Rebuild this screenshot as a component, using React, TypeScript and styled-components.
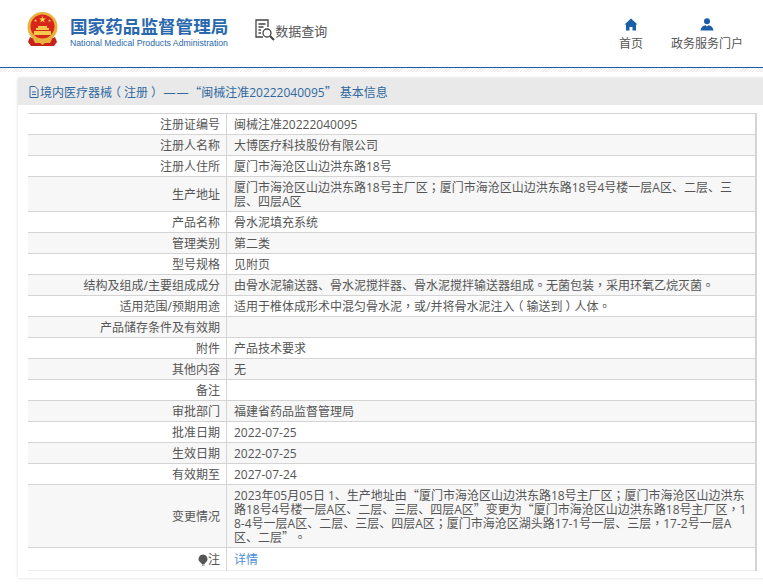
import React from 'react';
import styled, { createGlobalStyle } from 'styled-components';

const GlobalStyle = createGlobalStyle`
    html, body {
        margin: 0;
        padding: 0;
        background: #fff;
        overflow: hidden;
    }
    body {
        font-family: "Open Sans", "Noto Sans CJK SC", sans-serif;
    }
`

const Page = styled.div`
    width: 763px;
    height: 585px;
    overflow: hidden;
`

const Header = styled.header`
    display: flex;
    align-items: flex-start;
    height: 67px;
    border-bottom: 1px solid #1a5ea6;
`

const Brand = styled.div`
    display: flex;
    gap: 11px;
    margin: 12px 0 0 26px;
`

const BrandText = styled.div`
    display: flex;
    flex-direction: column;
    color: #2a68ad;
    font-family: "Liberation Sans", "Noto Sans CJK SC", sans-serif;
`

const BrandName = styled.div`
    font-size: 17.6px;
    font-weight: 700;
    line-height: 24px;
    margin-top: 3px;
`

const BrandEnglish = styled.div`
    font-size: 8.7px;
    line-height: 11px;
    margin-top: -1px;
    white-space: nowrap;
`

const QueryLink = styled.div`
    display: flex;
    align-items: center;
    margin: 19px 0 0 27px;
    font-size: 13px;
    color: #555;
`

const Nav = styled.nav`
    display: flex;
    margin-left: auto;
    margin-right: 20px;
    gap: 28px;
    margin-top: 18px;
`

const NavItem = styled.div`
    display: flex;
    flex-direction: column;
    align-items: center;
    gap: 5px;
    font-size: 12px;
    line-height: 16px;
    color: #555;
`

const Stripe = styled.div`
    height: 4px;
    background: repeating-linear-gradient(135deg, #ececec 0 1px, #fff 1px 2px);
`

const Panel = styled.section`
    margin: 6px 0 0 18px;
    width: 760px;
    height: 500px;
    background: #fff;
    box-shadow: 0 0 3px rgba(0, 0, 0, 0.16);
`

const PanelHeading = styled.h1`
    display: flex;
    align-items: center;
    margin: 0;
    height: 27px;
    padding-left: 11px;
    background: #e9e9e9;
    color: #30689f;
    font-size: 12px;
    font-weight: 400;
    white-space: pre;
`

const InfoTable = styled.table`
    border-collapse: collapse;
    table-layout: fixed;
    width: 729px;
    margin: 8px 0 0 10px;
    font-size: 12px;
    color: #555;
    border-top: 1px solid #d4d4d4;
`

const Row = styled.tr<{ $shaded: boolean }>`
    background: ${(p) => (p.$shaded ? '#f7f7f7' : '#fff')};
    border-bottom: 1px solid #d4d4d4;

    &:last-child {
        border-bottom-color: #ececec;
    }
`

const LabelCell = styled.td`
    width: 192px;
    padding: 2px 6px 0 0;
    text-align: right;
    border-right: 1px solid #d4d4d4;
    line-height: 14px;
`

const ValueCell = styled.td<{ $height: number }>`
    height: ${(p) => p.$height}px;
    padding: 4px 6px 2px 7px;
    box-sizing: border-box;
    line-height: 14px;
    word-break: break-all;
    border-right: 2px solid #d4d4d4;
`

const DetailLink = styled.a`
    color: #4a8fd8;
`

// full-width punctuation, the latin font would otherwise take the quotes
const Mark = styled.span<{ $nudge?: number }>`
    display: inline-block;
    width: 12px;
    line-height: 12px;
    font-family: "Noto Sans CJK TC", sans-serif;
    margin-left: ${(p) => p.$nudge ?? 0}px;
    margin-right: ${(p) => -(p.$nudge ?? 0)}px;
`

const QuoteMark = styled(Mark)`
    font-family: "Noto Sans CJK SC", sans-serif;
`

// wider than its box so that two of them join into one line
const DashMark = styled(QuoteMark)`
    width: 13px;
    font-size: 14px;
`

const typeset = (text: string) =>
    text.split(/([“”—；，。（）])/).map((part, i) => {
        if (part === '“' || part === '”') {
            return <QuoteMark key={i}>{part}</QuoteMark>;
        }
        if (part === '—') {
            return <DashMark key={i}>{part}</DashMark>;
        }
        if (part === '（') {
            return <Mark key={i} $nudge={-3}>{part}</Mark>;
        }
        if (part === '）') {
            return <Mark key={i} $nudge={3}>{part}</Mark>;
        }
        if (part.length === 1 && '；，。'.includes(part)) {
            return <Mark key={i}>{part}</Mark>;
        }
        return part;
    });

const BulbIcon = () => (
    <svg width="10" height="12" viewBox="0 0 10 12" style={{ verticalAlign: -2 }}>
        <path d="M5 0.5a4.5 4.5 0 0 1 4 6.500L6 10.500H4.500L1 7a4.500 4.500 0 0 1 4-6.500z" fill="#555" />
        <rect x="4" y="10.500" width="2.500" height="1.500" fill="#aaa" />
    </svg>
);

const rows: { label: React.ReactNode; value?: React.ReactNode; height?: number }[] = [
    { label: '注册证编号', value: '闽械注准20222040095' },
    { label: '注册人名称', value: '大博医疗科技股份有限公司' },
    { label: '注册人住所', value: '厦门市海沧区山边洪东路18号' },
    { label: '生产地址', value: typeset('厦门市海沧区山边洪东路18号主厂区；厦门市海沧区山边洪东路18号4号楼一层A区、二层、三层、四层A区'), height: 35 },
    { label: '产品名称', value: '骨水泥填充系统' },
    { label: '管理类别', value: '第二类' },
    { label: '型号规格', value: '见附页' },
    { label: '结构及组成/主要组成成分', value: typeset('由骨水泥输送器、骨水泥搅拌器、骨水泥搅拌输送器组成。无菌包装，采用环氧乙烷灭菌。') },
    { label: '适用范围/预期用途', value: typeset('适用于椎体成形术中混匀骨水泥，或/并将骨水泥注入（输送到）人体。') },
    { label: '产品储存条件及有效期' },
    { label: '附件', value: '产品技术要求' },
    { label: '其他内容', value: '无' },
    { label: '备注' },
    { label: '审批部门', value: '福建省药品监督管理局' },
    { label: '批准日期', value: '2022-07-25' },
    { label: '生效日期', value: '2022-07-25' },
    { label: '有效期至', value: '2027-07-24' },
    {
        label: '变更情况',
        value: typeset('2023年05月05日 1、生产地址由“厦门市海沧区山边洪东路18号主厂区；厦门市海沧区山边洪东路18号4号楼一层A区、二层、三层、四层A区”变更为“厦门市海沧区山边洪东路18号主厂区，18-4号一层A区、二层、三层、四层A区；厦门市海沧区湖头路17-1号一层、三层，17-2号一层A区、二层”。'),
        height: 63,
    },
    {
        label: (
            <>
                <BulbIcon />
                注
            </>
        ),
        value: <DetailLink>详情</DetailLink>,
        height: 23,
    },
];

const Emblem = () => (
    <svg width="33" height="36" viewBox="0 0 33 36">
        <circle cx="16.5" cy="15" r="15" fill="#e8b23c" />
        <circle cx="16.5" cy="14.500" r="12" fill="#d9261c" />
        <path d="M16.500 4l.9 2.500H20l-2.100 1.600.8 2.500-2.200-1.500-2.200 1.500.8-2.500L13 6.500h2.600z" fill="#f5d547" />
        <path d="M9.500 7l.4 1.100h1.200l-1 .7.400 1.200-1-.7-1 .7.400-1.200-1-.7h1.200zM23.500 7l.4 1.100h1.200l-1 .7.400 1.200-1-.7-1 .7.400-1.200-1-.7h1.200z" fill="#f5d547" />
        <path d="M12 14h9v2h2v2H10v-2h2zM8 19h17v4H8z" fill="#f2c94c" />
        <path d="M4 25l4 2h17l4-2 2 5-3 4H5l-3-4z" fill="#c9211a" />
        <path d="M7 27h19l-2 4h-5l-2.500 2-2.500-2H9z" fill="#e8b23c" />
    </svg>
);

const QueryIcon = () => (
    <svg width="20" height="22" viewBox="0 0 20 22" fill="none" stroke="#444" strokeWidth="1.300">
        <path d="M8 18H1V1h12v7" />
        <path d="M3.500 5h7M3.500 8h5M3.500 11h2.500M3.500 14h2.500" />
        <circle cx="12" cy="14" r="4" />
        <path d="M15 17l4 4" strokeWidth="2.200" />
    </svg>
);

const HomeIcon = () => (
    <svg width="14" height="13" viewBox="0 0 14 13" fill="#1a5ea6">
        <path d="M7 0.500L0.500 6.500H2V12.500H5.500V9H8.500V12.500H12V6.500H13.500z" />
    </svg>
);

const UserIcon = () => (
    <svg width="14" height="13" viewBox="0 0 14 13" fill="#1a5ea6">
        <circle cx="7" cy="3.200" r="3" />
        <path d="M0.500 12.500C1 9 3 7.500 5.500 7.200L7 8.500l1.500-1.300C11 7.500 13 9 13.500 12.500z" />
    </svg>
);

const DocIcon = () => (
    <svg width="10" height="12" viewBox="0 0 10 12" fill="none" stroke="#30689f" style={{ marginRight: 1 }}>
        <path d="M1 .5h5l3 3v8H1zM3 6h4M3 8.500h4" />
    </svg>
);

const App: React.FC = () => (
    <Page>
        <GlobalStyle />
        <Header>
            <Brand>
                <Emblem />
                <BrandText>
                    <BrandName>国家药品监督管理局</BrandName>
                    <BrandEnglish>National Medical Products Administration</BrandEnglish>
                </BrandText>
            </Brand>
            <QueryLink>
                <QueryIcon />
                数据查询
            </QueryLink>
            <Nav>
                <NavItem>
                    <HomeIcon />
                    首页
                </NavItem>
                <NavItem>
                    <UserIcon />
                    政务服务门户
                </NavItem>
            </Nav>
        </Header>
        <Stripe />
        <Panel>
            <PanelHeading>
                <DocIcon />
                <span>{typeset('境内医疗器械（注册） ——“闽械注准20222040095” 基本信息')}</span>
            </PanelHeading>
            <InfoTable>
                <tbody>
                    {rows.map((row, i) => (
                        <Row key={i} $shaded={i % 2 === 1}>
                            <LabelCell>{row.label}</LabelCell>
                            <ValueCell $height={row.height ?? 21}>{row.value}</ValueCell>
                        </Row>
                    ))}
                </tbody>
            </InfoTable>
        </Panel>
    </Page>
);

export default App;
